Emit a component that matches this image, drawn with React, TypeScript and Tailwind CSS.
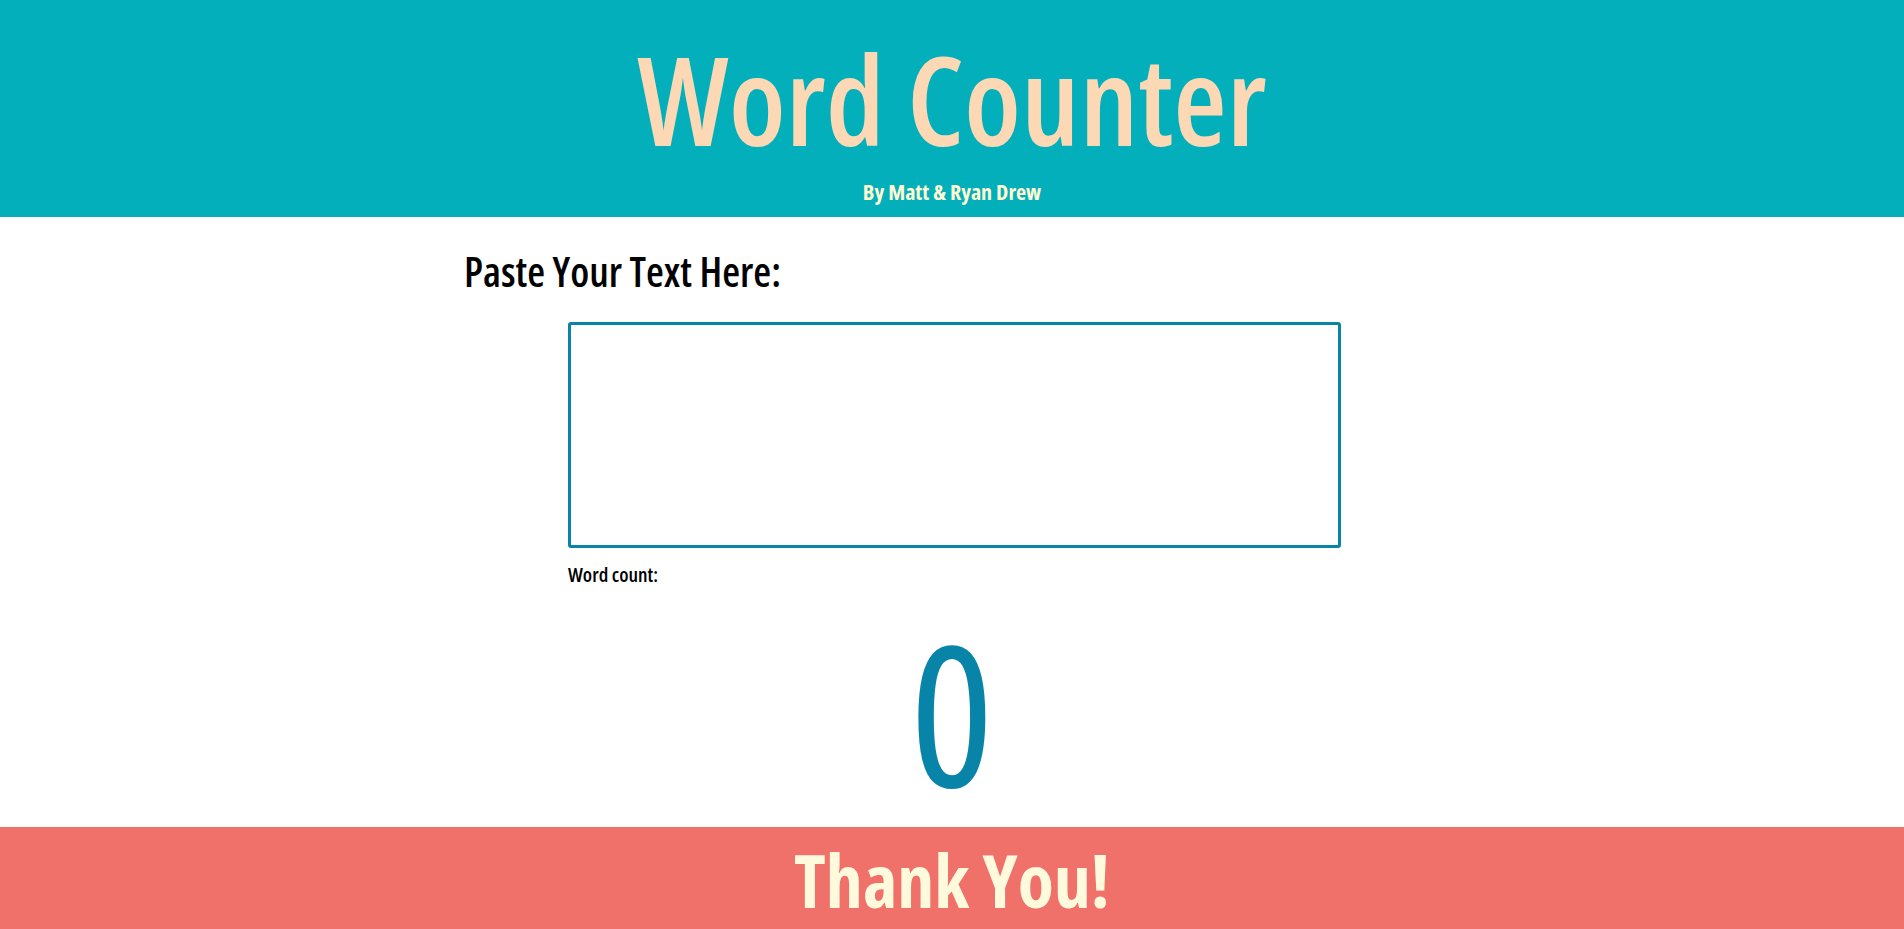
import { useState } from "react";

export default function App() {
  const [text, setText] = useState("");
  // count words the simple way: split on whitespace
  const count = text.trim() === "" ? 0 : text.trim().split(/\s+/).length;

  return (
    <div className="min-h-screen bg-white font-['Open_Sans',sans-serif] font-stretch-condensed">
      {/* header */}
      <header className="flex h-[217px] flex-col items-center bg-[#03afba] pt-[37px]">
        <h1 className="text-[123px] font-semibold leading-none text-[#fcd8b4]">Word Counter</h1>
        <p className="mt-[20px] text-[22px] font-bold leading-none text-[#fffad2]">By Matt &amp; Ryan Drew</p>
      </header>

      {/* main */}
      <main className="mx-auto w-[976px]">
        <h2 className="mt-[34px] text-[41px] font-semibold leading-none text-black">Paste Your Text Here:</h2>
        <div className="mt-[30px] ml-[104px] w-[773px]">
          <textarea
            value={text}
            onChange={(e) => setText(e.target.value)}
            className="block h-[226px] w-full resize-none rounded-[3px] border-[3px] border-[#0884a6] bg-white p-2 text-lg outline-none"
          />
          <p className="mt-[17px] text-[20px] font-semibold leading-none text-black">Word count:</p>
        </div>
        <div className="mt-[28px] text-center text-[196px] font-medium leading-none text-[#0884a8]">{count}</div>
      </main>

      {/* footer */}
      <footer className="mt-[18px] bg-[#f0716a] pt-[16px] pb-[24px] text-center">
        <span className="text-[74px] font-bold leading-none text-[#fffadc]">Thank You!</span>
      </footer>
    </div>
  );
}
